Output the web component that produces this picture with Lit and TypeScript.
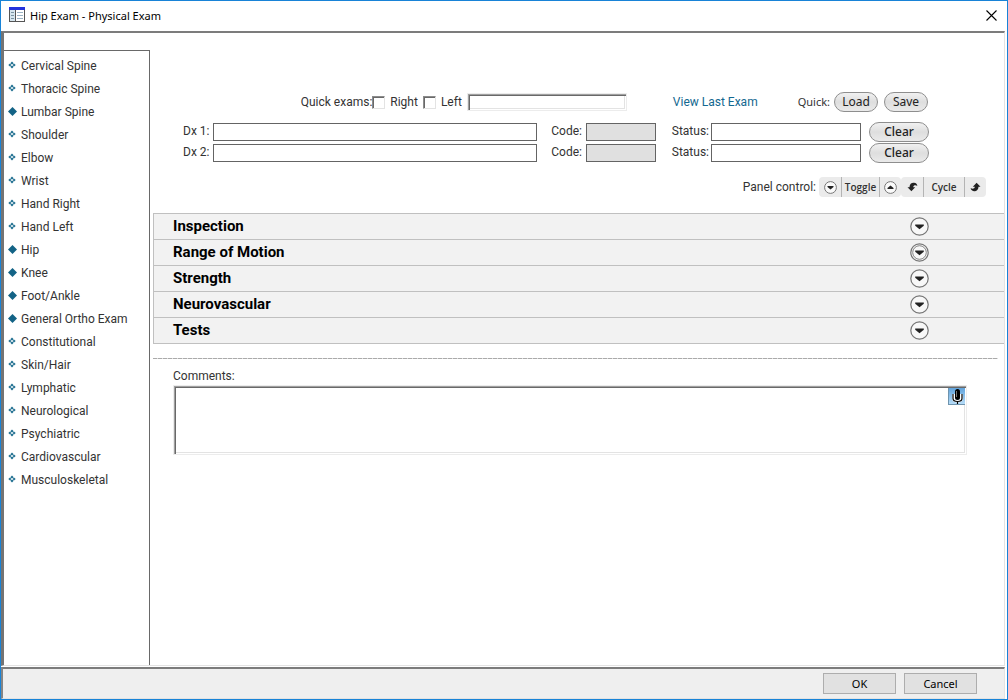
import { LitElement, html, css, svg } from "lit";
import { customElement, state } from "lit/decorators.js";

interface ExamArea {
  name: string;
  filled: boolean;
}

const AREAS: ExamArea[] = [
  { name: "Cervical Spine", filled: false },
  { name: "Thoracic Spine", filled: false },
  { name: "Lumbar Spine", filled: true },
  { name: "Shoulder", filled: false },
  { name: "Elbow", filled: false },
  { name: "Wrist", filled: false },
  { name: "Hand Right", filled: false },
  { name: "Hand Left", filled: false },
  { name: "Hip", filled: true },
  { name: "Knee", filled: true },
  { name: "Foot/Ankle", filled: true },
  { name: "General Ortho Exam", filled: true },
  { name: "Constitutional", filled: false },
  { name: "Skin/Hair", filled: false },
  { name: "Lymphatic", filled: false },
  { name: "Neurological", filled: false },
  { name: "Psychiatric", filled: false },
  { name: "Cardiovascular", filled: false },
  { name: "Musculoskeletal", filled: false },
];

const PANELS = ["Inspection", "Range of Motion", "Strength", "Neurovascular", "Tests"];

const solidDiamond = svg`<path d="M4.5 0 9 4.5 4.5 9 0 4.5Z" fill="#136386"/>`;
const openDiamond = svg`<path d="M4 0.500 5.700 2.200 4 3.400 2.300 2.200ZM0.300 4 2 2.400 3.400 4 2 5.600ZM7.700 4 6 2.400 4.600 4 6 5.600ZM4 7.500 5.700 5.800 4 4.600 2.300 5.800Z" fill="#1f6f90"/>`;

@customElement("exam-panel-header")
export class ExamPanelHeader extends LitElement {
  static properties = {
    label: { type: String },
    focusRing: { type: Boolean },
  };
  declare label: string;
  declare focusRing: boolean;

  static styles = css`
    :host {
      display: block;
    }
    .header {
      display: flex;
      align-items: center;
      justify-content: space-between;
      box-sizing: border-box;
      width: 100%;
      height: 26px;
      padding: 0 75px 0 19px;
      border: 0;
      border-bottom: 1px solid #c0c0c0;
      background: #f2f2f2;
      color: #000;
      font: bold 15px/20px Roboto, "Liberation Sans", sans-serif;
      text-align: left;
    }
    .label {
      padding-bottom: 2px;
    }
    .arrow {
      width: 19px;
      height: 19px;
    }
  `;

  render() {
    return html`<button class="header" type="button">
      <span class="label">${this.label}</span>
      <svg class="arrow" viewBox="0 0 19 19" aria-hidden="true">
        <circle cx="9.5" cy="9.5" r="8.7" fill="#f8f8f8" stroke="#747474" stroke-width="1.2" />
        ${this.focusRing
          ? svg`<circle cx="9.5" cy="9.5" r="6.8" fill="none" stroke="#777" stroke-width="0.9"/>`
          : null}
        <path d="M5.2 7.600h8.600v1.200L9.500 12.300 5.200 8.800Z" fill="#222" />
      </svg>
    </button>`;
  }
}

@customElement("app-root")
export class AppRoot extends LitElement {
  @state() private selected = "Hip";

  static styles = css`
    :host {
      display: block;
      font: 12px/16px Roboto, "Liberation Sans", sans-serif;
      color: #333;
    }
    * {
      box-sizing: border-box;
    }
    button,
    input,
    textarea {
      font: inherit;
      color: inherit;
      margin: 0;
    }
    button {
      padding: 0;
    }
    .window {
      display: flex;
      flex-direction: column;
      min-height: 100vh;
      border: 1px solid #1883d7;
      background: #fff;
    }
    .titlebar {
      display: flex;
      align-items: center;
      gap: 5px;
      height: 30px;
      padding: 0 10px 2px 8px;
      color: #000;
      font-family: "Noto Sans", "Open Sans", sans-serif;
    }
    .title {
      flex: 1;
      margin: 0;
      padding-top: 2px;
      font-size: 11px;
      font-weight: normal;
    }
    .close {
      display: flex;
      border: 0;
      background: none;
    }
    .body {
      display: flex;
      flex: 1;
      margin-right: 2px;
      border: solid;
      border-width: 2px 1px 1px 3px;
      border-color: #7c7c7c #e3e3e3 #e3e3e3 #747474;
    }
    .sidebar {
      width: 146px;
      margin-top: 17px;
      padding: 3px 0 0 4px;
      border-top: 1px solid #696969;
      border-right: 1px solid #696969;
    }
    .areas {
      margin: 0;
      padding: 0;
      list-style: none;
    }
    .area {
      display: flex;
      align-items: center;
      gap: 4px;
      height: 23px;
      color: #333;
      text-decoration: none;
    }
    .bullet {
      width: 9px;
      height: 9px;
    }
    .main {
      flex: 1;
      min-width: 0;
      padding: 58px 0 0 3px;
    }
    .quick {
      display: flex;
      align-items: center;
      justify-content: flex-end;
      height: 22px;
      padding-right: 76px;
    }
    .check {
      appearance: none;
      width: 13px;
      height: 13px;
      border: 1px solid #e3e3e3;
      border-top-color: #8c8c8c;
      border-left-color: #8c8c8c;
      box-shadow: inset 1px 1px #696969;
      background: #fff;
    }
    .checklabel {
      margin: 0 5px;
    }
    .sunken {
      border: 1px solid #ececec;
      border-radius: 0;
      box-shadow: inset 1px 1px #a0a0a0, inset 2px 2px #696969, inset -1px -1px #fff,
        inset -2px -2px #e3e3e3;
      background: #fff;
    }
    .quicktext {
      width: 160px;
      height: 18px;
    }
    .last {
      margin: 0 40px 0 46px;
      color: #136890;
      text-decoration: none;
    }
    .quicklabel {
      margin-right: 4px;
      font-family: "Noto Sans", "Open Sans", sans-serif;
      font-size: 11px;
    }
    .pill {
      width: 44px;
      height: 20px;
      border: 1px solid #8e8e8e;
      border-radius: 10px;
      background: linear-gradient(#f1f1f1, #dedede 50%, #eaeaea);
      color: #222;
      font: 400 12px/16px "Noto Sans", "Open Sans", sans-serif;
    }
    .pill + .pill {
      margin-left: 6px;
    }
    .wide {
      width: 60px;
      font-weight: 500;
    }
    .diagnoses {
      display: grid;
      grid-template-columns: 30px 1fr 49px 70px 55px 150px 68px;
      grid-auto-rows: 20px;
      row-gap: 1px;
      align-items: center;
      margin: 9px 75px 0 30px;
    }
    .code,
    .status {
      padding-right: 4px;
      text-align: right;
    }
    .status {
      padding-right: 2px;
    }
    .diagnoses label {
      padding-bottom: 2px;
    }
    .field {
      width: 100%;
      min-width: 0;
      height: 18px;
      border: 1px solid #646464;
      border-radius: 0;
      background: #fff;
    }
    .field:disabled {
      background: #e0e0e0;
    }
    .clear {
      justify-self: end;
    }
    .control {
      display: flex;
      align-items: center;
      justify-content: flex-end;
      height: 20px;
      margin: 14px 18px 0 0;
    }
    .controllabel {
      margin-right: 3px;
    }
    .group {
      display: flex;
      border-radius: 4px;
      background: #ebebeb;
    }
    .tool {
      display: flex;
      align-items: center;
      justify-content: center;
      width: 22px;
      height: 20px;
      border: 0;
      background: none;
      color: #333;
      font: 600 10px/16px "Open Sans", "Noto Sans", sans-serif;
    }
    .tool + .tool {
      border-left: 1px solid #b4b4b4;
    }
    .toggle {
      width: 38px;
    }
    .cycle {
      width: 41px;
    }
    .panels {
      margin-top: 16px;
      border-top: 1px solid #c0c0c0;
      border-left: 1px solid #c0c0c0;
    }
    .rule {
      height: 1px;
      margin: 14px 6px 0 0;
      border: 0;
      background: repeating-linear-gradient(90deg, #aaa 0 4px, #ddd 4px 5px);
    }
    .comments {
      display: flex;
      flex-direction: column;
      position: relative;
      margin: 9px 37px 0 20px;
    }
    .notes {
      width: 100%;
      height: 70px;
      margin-top: 1px;
      padding: 4px 24px 4px 5px;
      resize: none;
    }
    .mic {
      display: flex;
      align-items: center;
      justify-content: center;
      position: absolute;
      right: 2px;
      bottom: 50px;
      width: 17px;
      height: 17px;
      border: 1px solid #6f94ae;
      border-width: 0 0 1px 1px;
      background: linear-gradient(#62a4dc, #b5dcf8);
    }
    .footer {
      display: flex;
      justify-content: flex-end;
      gap: 8px;
      height: 32px;
      margin: 1px 2px 0 0;
      padding: 4px 27px 0 0;
      border: solid;
      border-width: 2px 1px 1px 2px;
      border-color: #7c7c7c #e3e3e3 #e3e3e3 #858585;
      background: #efefef;
    }
    .action {
      width: 73px;
      height: 21px;
      border: 1px solid #adadad;
      background: #e1e1e1;
      color: #000;
      font-family: "Noto Sans", "Open Sans", sans-serif;
      font-size: 11px;
    }
  `;

  private renderArea(area: ExamArea) {
    return html`<li>
      <a
        class="area"
        href="#"
        aria-current=${this.selected === area.name ? "page" : "false"}
        @click=${(e: Event) => {
          e.preventDefault();
          this.selected = area.name;
        }}
      >
        <svg class="bullet" viewBox="0 0 9 9" aria-hidden="true">
          ${area.filled ? solidDiamond : openDiamond}
        </svg>
        ${area.name}
      </a>
    </li>`;
  }

  private renderDiagnosis(n: number) {
    return html`
      <label for="dx${n}">Dx ${n}:</label>
      <input class="field" id="dx${n}" type="text" />
      <label class="code" for="code${n}">Code:</label>
      <input class="field" id="code${n}" type="text" disabled />
      <label class="status" for="status${n}">Status:</label>
      <input class="field" id="status${n}" type="text" />
      <button class="pill wide clear" type="button">Clear</button>
    `;
  }

  render() {
    return html`
      <div class="window">
        <header class="titlebar">
          <svg width="16" height="16" viewBox="0 0 16 16" aria-hidden="true">
            <rect x="0.5" y="0.5" width="15" height="14" fill="#fff" stroke="#555" />
            <rect x="0" y="0" width="16" height="3" fill="#2433dc" />
            <rect x="1" y="3" width="5" height="11" fill="#d5e5ee" />
            <path d="M6.5 3v11" stroke="#555" />
            <path d="M2 5.5h3M2 8.5h3M2 11.5h3" stroke="#7b94a3" />
            <path d="M8 5.5h6M8 8.5h6M8 11.5h6" stroke="#9bb3c4" />
          </svg>
          <h1 class="title">Hip Exam - Physical Exam</h1>
          <button class="close" type="button" aria-label="Close">
            <svg width="11" height="11" viewBox="0 0 11 11">
              <path d="M0.5 0.5l10 10M10.5 0.5l-10 10" stroke="#000" stroke-width="1.1" />
            </svg>
          </button>
        </header>

        <div class="body">
          <nav class="sidebar" aria-label="Exam areas">
            <ul class="areas">
              ${AREAS.map((a) => this.renderArea(a))}
            </ul>
          </nav>

          <main class="main">
            <div class="quick">
              <label for="quick-text">Quick exams:</label>
              <input class="check" id="right" type="checkbox" />
              <label class="checklabel" for="right">Right</label>
              <input class="check" id="left" type="checkbox" />
              <label class="checklabel" for="left">Left</label>
              <input class="sunken quicktext" id="quick-text" type="text" />
              <a class="last" href="#">View Last Exam</a>
              <span class="quicklabel">Quick:</span>
              <button class="pill" type="button">Load</button>
              <button class="pill" type="button">Save</button>
            </div>

            <div class="diagnoses">${[1, 2].map((n) => this.renderDiagnosis(n))}</div>

            <div class="control">
              <span class="controllabel">Panel control:</span>
              <div class="group">
                <button class="tool" type="button" aria-label="Expand all">
                  <svg width="13" height="13" viewBox="0 0 13 13">
                    <circle cx="6.5" cy="6.5" r="5.9" fill="#fafafa" stroke="#777" />
                    <path d="M3.5 5h6v1L6.5 8.5 3.5 6Z" fill="#222" />
                  </svg>
                </button>
                <button class="tool toggle" type="button">Toggle</button>
                <button class="tool" type="button" aria-label="Collapse all">
                  <svg width="13" height="13" viewBox="0 0 13 13">
                    <circle cx="6.5" cy="6.5" r="5.9" fill="#fafafa" stroke="#777" />
                    <path d="M3.5 8h6V7L6.5 4.5 3.5 7Z" fill="#222" />
                  </svg>
                </button>
              </div>
              <div class="group">
                <button class="tool" type="button" aria-label="Previous">
                  <svg width="11" height="10" viewBox="0 0 11 10">
                    <path d="M0.5 5.2h2C2.6 2 4.5 0.6 7 0.8 9.2 1 10.2 2.4 10.3 4 9 2.8 6.4 2.9 6.2 5.2h2L4.4 9.3Z" fill="#222" />
                  </svg>
                </button>
                <button class="tool cycle" type="button">Cycle</button>
                <button class="tool" type="button" aria-label="Next">
                  <svg width="11" height="10" viewBox="0 0 11 10">
                    <path d="M10.5 4.8h-2C8.4 8 6.5 9.4 4 9.2 1.8 9 0.8 7.6 0.7 6 2 7.2 4.6 7.1 4.8 4.8h-2L6.6 0.7Z" fill="#222" />
                  </svg>
                </button>
              </div>
            </div>

            <section class="panels">
              ${PANELS.map(
                (p) => html`<exam-panel-header
                  .label=${p}
                  .focusRing=${p === "Range of Motion"}
                ></exam-panel-header>`
              )}
            </section>

            <hr class="rule" />

            <div class="comments">
              <label for="notes">Comments:</label>
              <textarea class="sunken notes" id="notes"></textarea>
              <button class="mic" type="button" aria-label="Dictate">
                <svg width="11" height="15" viewBox="0 0 11 15">
                  <path d="M1.5 5v4.500q0 2.500 4 2.500t4-2.500V5" fill="none" stroke="#fff" stroke-width="3" />
                  <rect x="3" y="0" width="5" height="11" rx="2.5" fill="#000" />
                  <path d="M1 5v4.500q0 3 4.500 3t4.500-3V5M5.500 12v3" fill="none" stroke="#000" stroke-width="1.2" />
                  <path d="M4.5 2v6" stroke="#777" />
                </svg>
              </button>
            </div>
          </main>
        </div>

        <footer class="footer">
          <button class="action" type="button">OK</button>
          <button class="action" type="button">Cancel</button>
        </footer>
      </div>
    `;
  }
}
